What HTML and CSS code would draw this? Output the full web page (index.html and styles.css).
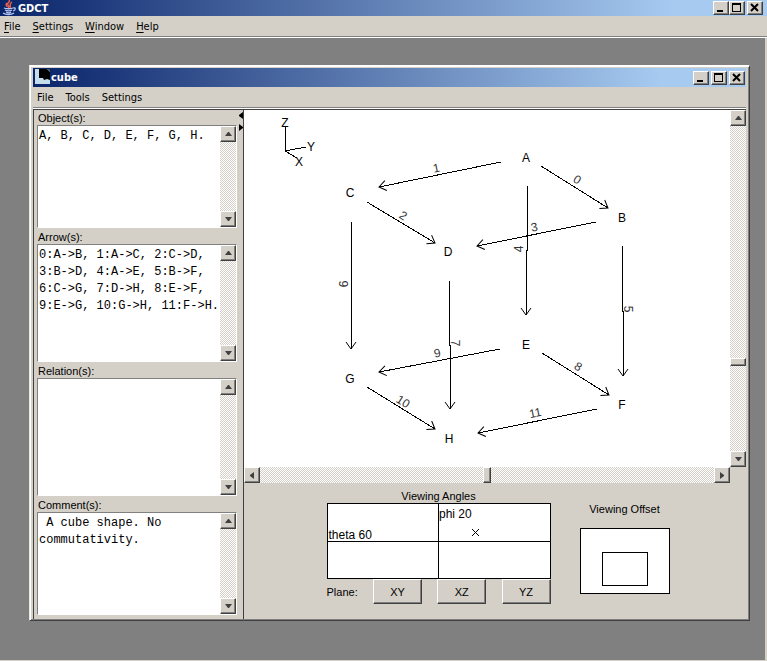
FILE: index.html
```html
<!DOCTYPE html>
<html lang="en">
  <head>
    <meta charset="UTF-8" />
    <meta name="viewport" content="width=device-width, initial-scale=1.0" />
    <title>GDCT</title>
    <link rel="stylesheet" href="styles.css">
  </head>

  <body>
    <header class="titleBar mainTitle">
      <svg class="javaIcon" width="16" height="16" viewBox="0 0 16 16" fill="none">
        <path d="M8 0c2 2-3 3-1 5 1 1 1 2 0 3M11 2C8 4 10 5 9 8M6 3c-2 2 0 3 0 4" stroke="#e8604c" stroke-width="1.5" />
        <path d="M3 8c2 1 7 1 9 0M4 10c2 1 5 1 7 0M5 12c2 1 4 1 5 0M12 8c3-1 3 2 0 3M2 13c3 2 8 2 11 0" stroke="#b4c4ee" stroke-width="1.3" />
      </svg>
      <h1>GDCT</h1>
      <div class="windowButtons">
        <button aria-label="Minimize"><svg width="12" height="10"><path d="M2 7h6v2H2z" /></svg></button>
        <button aria-label="Maximize"><svg width="12" height="10"><path d="M1 0h9v9H1zM2 2v6h7V2z" fill-rule="evenodd" /></svg></button>
        <button class="closeButton" aria-label="Close"><svg width="12" height="10"><path d="M2 1l7 7M9 1l-7 7" stroke="#000" stroke-width="2" /></svg></button>
      </div>
    </header>
    <nav class="menuBar mainMenu">
      <a href="#"><u>F</u>ile</a>
      <a href="#"><u>S</u>ettings</a>
      <a href="#"><u>W</u>indow</a>
      <a href="#"><u>H</u>elp</a>
    </nav>

    <main class="desktop">
      <section class="cubeWindow">
        <header class="titleBar cubeTitle">
          <svg width="16" height="18" viewBox="0 0 16 18">
            <path d="M1 0h15v15H1z" fill="#c4dcec" />
            <path d="M5 0h8l3 3v8l-3-1-3 1-1-2H5z" fill="#000" />
            <path d="M13 0h3v3z" fill="#456" />
          </svg>
          <h2>cube</h2>
          <div class="windowButtons">
            <button aria-label="Minimize"><svg width="12" height="10"><path d="M2 7h6v2H2z" /></svg></button>
            <button aria-label="Maximize"><svg width="12" height="10"><path d="M1 0h9v9H1zM2 2v6h7V2z" fill-rule="evenodd" /></svg></button>
            <button aria-label="Close"><svg width="12" height="10"><path d="M2 1l7 7M9 1l-7 7" stroke="#000" stroke-width="2" /></svg></button>
          </div>
        </header>
        <nav class="menuBar cubeMenu">
          <a href="#">File</a>
          <a href="#">Tools</a>
          <a href="#">Settings</a>
        </nav>

        <div class="content">
          <div class="fields">
            <div class="field short">
              <label for="objects">Object(s):</label>
              <div class="textBlock">
                <textarea id="objects" spellcheck="false">A, B, C, D, E, F, G, H.</textarea>
                <div class="scroll vertical">
                  <button aria-label="Scroll up"><svg width="7" height="4"><path d="M3 0h1l3 4H0z" /></svg></button>
                  <button aria-label="Scroll down"><svg width="7" height="4"><path d="M0 0h7L4 4H3z" /></svg></button>
                </div>
              </div>
            </div>
            <div class="field">
              <label for="arrows">Arrow(s):</label>
              <div class="textBlock">
                <textarea id="arrows" spellcheck="false">0:A-&gt;B, 1:A-&gt;C, 2:C-&gt;D,
3:B-&gt;D, 4:A-&gt;E, 5:B-&gt;F,
6:C-&gt;G, 7:D-&gt;H, 8:E-&gt;F,
9:E-&gt;G, 10:G-&gt;H, 11:F-&gt;H.</textarea>
                <div class="scroll vertical">
                  <button aria-label="Scroll up"><svg width="7" height="4"><path d="M3 0h1l3 4H0z" /></svg></button>
                  <button aria-label="Scroll down"><svg width="7" height="4"><path d="M0 0h7L4 4H3z" /></svg></button>
                </div>
              </div>
            </div>
            <div class="field">
              <label for="relations">Relation(s):</label>
              <div class="textBlock">
                <textarea id="relations" spellcheck="false"></textarea>
                <div class="scroll vertical">
                  <button aria-label="Scroll up"><svg width="7" height="4"><path d="M3 0h1l3 4H0z" /></svg></button>
                  <button aria-label="Scroll down"><svg width="7" height="4"><path d="M0 0h7L4 4H3z" /></svg></button>
                </div>
              </div>
            </div>
            <div class="field short">
              <label for="comments">Comment(s):</label>
              <div class="textBlock">
                <textarea id="comments" spellcheck="false"> A cube shape. No
commutativity.</textarea>
                <div class="scroll vertical">
                  <button aria-label="Scroll up"><svg width="7" height="4"><path d="M3 0h1l3 4H0z" /></svg></button>
                  <button aria-label="Scroll down"><svg width="7" height="4"><path d="M0 0h7L4 4H3z" /></svg></button>
                </div>
              </div>
            </div>
          </div>

          <div class="divider">
            <svg width="4" height="20"><path d="M4 0v7L0 4V3zM0 12l4 3v1l-4 3z" /></svg>
          </div>

          <div class="viewer">
            <div class="graphBlock">
              <svg class="graph" width="486" height="357">
                <defs>
                  <marker id="head" markerWidth="12" markerHeight="14" refX="8" refY="6" orient="auto" markerUnits="userSpaceOnUse">
                    <path d="M1 1l7 5l-7 5" fill="none" stroke="#000" />
                  </marker>
                </defs>
                <!-- axes -->
                <g class="lines">
                  <path d="M41 17v24l21-4M41 41l12 7" />
                </g>
                <text x="41" y="17">Z</text>
                <text x="67" y="41">Y</text>
                <text x="55" y="56">X</text>

                <!-- arrows -->
                <g class="lines arrows">
                  <path d="M297 56L364 98" />
                  <path d="M257 52L135 77" />
                  <path d="M123 92L191 133" />
                  <path d="M352 112L233 136" />
                  <path d="M283 76V140H282V205" />
                  <path d="M378 136V201H379V266" />
                  <path d="M107 112V239" />
                  <path d="M205 171V235H206V299" />
                  <path d="M298 243L365 285" />
                  <path d="M256 239L135 262" />
                  <path d="M123 277L191 319" />
                  <path d="M353 299L234 323" />
                </g>

                <!-- objects -->
                <text x="282" y="52">A</text>
                <text x="378" y="112">B</text>
                <text x="106" y="87">C</text>
                <text x="204" y="146">D</text>
                <text x="282" y="239">E</text>
                <text x="378" y="299">F</text>
                <text x="106" y="273">G</text>
                <text x="205" y="333">H</text>

                <!-- arrow numbers, turned along their arrows -->
                <g class="numbers">
                  <text transform="translate(331 73) rotate(32)">0</text>
                  <text transform="translate(193 62) rotate(-11)">1</text>
                  <text transform="translate(157 109) rotate(32)">2</text>
                  <text transform="translate(291 121) rotate(-11)">3</text>
                  <text transform="translate(279 139) rotate(-90)">4</text>
                  <text transform="translate(380 199) rotate(90)">5</text>
                  <text transform="translate(104 174) rotate(-90)">6</text>
                  <text transform="translate(207 233) rotate(90)">7</text>
                  <text transform="translate(332 260) rotate(32)">8</text>
                  <text transform="translate(194 247) rotate(-11)">9</text>
                  <text transform="translate(157 295) rotate(32)">10</text>
                  <text transform="translate(292 307) rotate(-11)">11</text>
                </g>
              </svg>
              <div class="scroll vertical">
                <button aria-label="Scroll up"><svg width="7" height="4"><path d="M3 0h1l3 4H0z" /></svg></button>
                <div class="before"></div>
                <div class="thumb"></div>
                <div class="after"></div>
                <button aria-label="Scroll down"><svg width="7" height="4"><path d="M0 0h7L4 4H3z" /></svg></button>
              </div>
              <div class="scroll horizontal">
                <button aria-label="Scroll left"><svg width="4" height="7"><path d="M4 0v7L0 4V3z" /></svg></button>
                <div class="thumb"></div>
                <button aria-label="Scroll right"><svg width="4" height="7"><path d="M0 0l4 3v1L0 7z" /></svg></button>
              </div>
            </div>

            <div class="controls">
              <div class="angles">
                <h3>Viewing Angles</h3>
                <div class="anglePad">
                  <div class="theta">theta 60</div>
                  <div class="phi">
                    <span>phi 20</span>
                    <svg width="9" height="9"><path d="M1 1l7 7M8 1l-7 7" stroke="#000" /></svg>
                  </div>
                  <div></div>
                  <div></div>
                </div>
                <div class="planes">
                  <span>Plane:</span>
                  <button>XY</button>
                  <button>XZ</button>
                  <button>YZ</button>
                </div>
              </div>
              <div class="offset">
                <h3>Viewing Offset</h3>
                <div class="offsetPad">
                  <div class="offsetBox"></div>
                </div>
              </div>
            </div>
          </div>
        </div>
      </section>
    </main>
  </body>
</html>
```
FILE: styles.css
```css
* {
  box-sizing: border-box;
}

body {
  margin: 0;
  min-height: 100vh;
  display: flex;
  flex-direction: column;
  background-color: #d4d0c8;
  color: #000;
  font-family: "Liberation Sans", Arial, sans-serif;
  font-size: 11px;
}

h1, h2, h3 {
  margin: 0;
  font-size: 11px;
}

h3 {
  font-weight: normal;
  line-height: 14px;
}

svg {
  display: block;
}

button {
  display: flex;
  align-items: center;
  justify-content: center;
  padding: 0;
  background-color: #d4d0c8;
  border: 1px solid;
  border-color: #fff #404040 #404040 #fff;
  box-shadow: inset -1px -1px #808080;
  font-family: inherit;
  font-size: 11px;
  color: #000;
}

/* title bars */
.titleBar {
  display: flex;
  align-items: center;
  background: linear-gradient(to right, #0a246a, #a6caf0 88%);
  color: #fff;
}

.titleBar h1,
.titleBar h2 {
  flex: 1;
  font-family: "DejaVu Sans Condensed", "DejaVu Sans", sans-serif;
}

.mainTitle {
  height: 16px;
  padding: 0 4px 0 1px;
  gap: 1px;
}

.cubeTitle {
  height: 19px;
  padding: 0 1px;
  gap: 1px;
}

.windowButtons {
  display: flex;
}

.windowButtons button {
  width: 16px;
  height: 14px;
}

.windowButtons .closeButton {
  margin-left: 2px;
}

.cubeTitle .windowButtons {
  gap: 2px;
}

/* menus */
.menuBar {
  display: flex;
  align-items: center;
  height: 22px;
  padding-left: 4px;
  gap: 12px;
  border-bottom: 1px solid #fff;
  box-shadow: inset 0 -1px #808080;
  font-family: "DejaVu Sans Condensed", "DejaVu Sans", sans-serif;
  font-size: 11px;
}

.menuBar a {
  color: #000;
  text-decoration: none;
}

.menuBar u {
  text-underline-offset: 2px;
}

/* windows */
.desktop {
  flex: 1;
  display: flex;
  margin: 0 2px 1px 0;
  padding: 27px 15px 39px 29px;
  background-color: #808080;
}

.cubeWindow {
  flex: 1;
  display: flex;
  flex-direction: column;
  padding: 2px 3px 1px;
  background-color: #d4d0c8;
  border: 1px solid;
  border-color: #fff #404040 #404040 #e8e6e0;
  box-shadow: inset 1px 1px #fff, inset -1px -1px #808080;
}

.content {
  flex: 1;
  display: flex;
  border: solid #404040;
  border-width: 1px 0 0 1px;
}

/* left column */
.fields {
  width: 204px;
  display: flex;
  flex-direction: column;
  gap: 1px;
  padding: 0 1px 4px 3px;
}

.field {
  flex: 133 1 0;
  display: flex;
  flex-direction: column;
}

.field.short {
  flex-grow: 118;
}

.field label {
  height: 15px;
  padding-left: 1px;
  line-height: 16px;
}

.textBlock {
  flex: 1;
  display: flex;
  border: 1px solid;
  border-color: #808080 #fff #fff #808080;
  background-color: #fff;
}

textarea {
  flex: 1;
  min-width: 0;
  padding: 2px 0 0 1px;
  border: 0;
  outline: 0;
  resize: none;
  overflow: hidden;
  white-space: pre;
  background-color: #fff;
  color: #000;
  font-family: "Liberation Mono", "Courier New", monospace;
  font-size: 12px;
  line-height: 17px;
}

.divider {
  width: 6px;
  padding-top: 2px;
  display: flex;
  justify-content: flex-end;
  border-right: 1px solid #404040;
}

/* scroll bars */
.scroll {
  display: flex;
  justify-content: space-between;
  background: repeating-conic-gradient(#fff 0 25%, #d4d0c8 0 50%) 0 0 / 2px 2px;
}

.scroll button {
  width: 16px;
  height: 16px;
}

.scroll path {
  fill: #404040;
}

.vertical {
  width: 16px;
  flex-direction: column;
}

.thumb {
  background-color: #d4d0c8;
  border: 1px solid;
  border-color: #fff #404040 #404040 #fff;
  box-shadow: inset -1px -1px #808080;
}

.vertical .thumb {
  height: 8px;
}

.horizontal .thumb {
  width: 8px;
}

.vertical .before {
  flex: 232;
}

.vertical .after {
  flex: 85;
}

/* graph */
.viewer {
  flex: 1;
  display: flex;
  flex-direction: column;
}

.graphBlock {
  flex: 1;
  display: grid;
  grid-template-columns: 1fr 16px;
  grid-template-rows: 1fr 16px;
}

.graph {
  width: 100%;
  height: 100%;
  background-color: #fff;
  font-size: 12px;
  text-anchor: middle;
}

.lines path {
  fill: none;
  stroke: #000;
  shape-rendering: crispEdges;
}

.arrows path {
  marker-end: url(#head);
}

.numbers {
  fill: #333;
}

/* bottom panel */
.controls {
  height: 136px;
  display: flex;
  justify-content: center;
  gap: 29px;
  padding: 6px 0 0 6px;
}

.angles {
  width: 224px;
}

.controls h3 {
  text-align: center;
}

.anglePad {
  height: 76px;
  display: grid;
  grid-template-columns: 1fr 1fr;
  grid-template-rows: 1fr 1fr;
  gap: 1px;
  border: 1px solid #000;
  background-color: #000;
  font-size: 12px;
}

.anglePad > div {
  background-color: #fff;
}

.theta {
  display: flex;
  align-items: flex-end;
  padding-left: 1px;
  line-height: 12px;
}

.phi {
  display: grid;
  align-content: space-between;
  padding: 3px 0 4px;
}

.phi svg {
  margin-left: 32px;
}

.planes {
  display: flex;
  align-items: center;
  justify-content: space-between;
}

.planes button {
  width: 49px;
  height: 25px;
}

.offset {
  width: 90px;
  padding-top: 13px;
}

.offsetPad {
  height: 66px;
  margin-top: 12px;
  padding: 23px 21px 7px;
  border: 1px solid #000;
  background-color: #fff;
}

.offsetBox {
  height: 34px;
  border: 1px solid #000;
}
```
